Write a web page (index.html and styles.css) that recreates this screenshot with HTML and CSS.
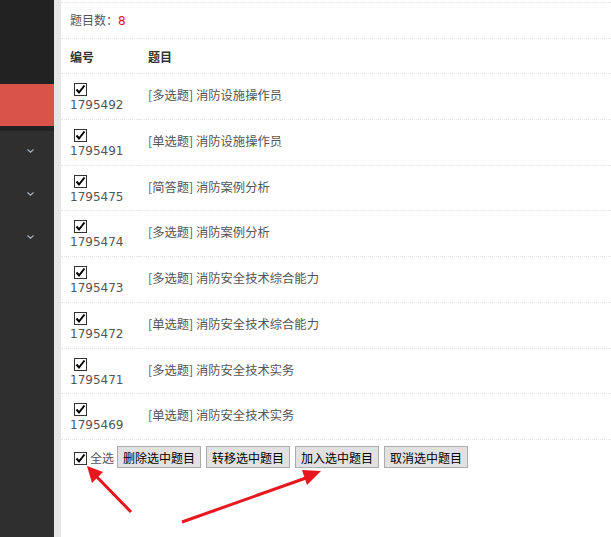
FILE: index.html
```html
<!DOCTYPE html>
<html>
<head>
  <title>题目列表</title>
  <meta charset="UTF-8">
  <link rel="stylesheet" href="styles.css">
</head>
<body>
  <div class="page">
    <div class="sidebar">
      <div class="side-top"></div>
      <div class="side-active"></div>
      <div class="side-gap"></div>
      <div class="side-menu">
        <div class="side-item"><svg class="chev" width="7" height="4" viewBox="0 0 7 4"><polyline points="0.5,0.5 3.5,3.2 6.5,0.5" fill="none" stroke="#a8b2bc" stroke-width="1.2"/></svg></div>
        <div class="side-item"><svg class="chev" width="7" height="4" viewBox="0 0 7 4"><polyline points="0.5,0.5 3.5,3.2 6.5,0.5" fill="none" stroke="#a8b2bc" stroke-width="1.2"/></svg></div>
        <div class="side-item"><svg class="chev" width="7" height="4" viewBox="0 0 7 4"><polyline points="0.5,0.5 3.5,3.2 6.5,0.5" fill="none" stroke="#a8b2bc" stroke-width="1.2"/></svg></div>
      </div>
    </div>
    <div class="gutter"></div>
    <div class="main">
      <div class="count-row">题目数：<span class="count">8</span></div>
      <table class="qlist">
        <thead>
          <tr><th class="col-id">编号</th><th>题目</th></tr>
        </thead>
        <tbody id="rows"></tbody>
      </table>
      <div class="actions">
        <span class="cbx"><svg viewBox="0 0 13 13" width="13" height="13"><rect x="0.5" y="0.5" width="12" height="12" fill="#fff" stroke="#333"/><path d="M2.5 6.5 L5 9.5 L10.5 2.5" fill="none" stroke="#000" stroke-width="2"/></svg></span>
        <span class="all-label">全选</span>
        <button>删除选中题目</button>
        <button>转移选中题目</button>
        <button>加入选中题目</button>
        <button>取消选中题目</button>
      </div>
      <svg class="arrows" width="400" height="90" viewBox="0 0 400 90">
        <line x1="131" y1="512" x2="95" y2="475" transform="translate(-61 -450)" stroke="#e8171d" stroke-width="3"/>
        <polygon points="87,466 103,472 92,483" transform="translate(-61 -450)" fill="#e8171d"/>
        <line x1="182" y1="522" x2="306" y2="478" transform="translate(-61 -450)" stroke="#e8171d" stroke-width="3"/>
        <polygon points="321,471 302,470 307,485" transform="translate(-61 -450)" fill="#e8171d"/>
      </svg>
    </div>
  </div>

  <script>
    const questions = [
      ['1795492', '多选题', '消防设施操作员'],
      ['1795491', '单选题', '消防设施操作员'],
      ['1795475', '简答题', '消防案例分析'],
      ['1795474', '多选题', '消防案例分析'],
      ['1795473', '多选题', '消防安全技术综合能力'],
      ['1795472', '单选题', '消防安全技术综合能力'],
      ['1795471', '多选题', '消防安全技术实务'],
      ['1795469', '单选题', '消防安全技术实务']
    ];
    const box = document.querySelector('.actions .cbx').innerHTML;
    const tbody = document.getElementById('rows');
    questions.forEach(q => {
      const tr = document.createElement('tr');
      tr.innerHTML = '<td class="col-id"><span class="cbx">' + box + '</span><div class="qid">' + q[0] + '</div></td>' +
        '<td class="qtext">[' + q[1] + '] ' + q[2] + '</td>';
      tbody.appendChild(tr);
    });
  </script>
</body>
</html>
```

FILE: styles.css
```css
body {
  margin: 0;
  font-family: "DejaVu Sans", "Noto Sans CJK SC", sans-serif;
  font-size: 12px;
  color: #555;
  background-color: #fff;
}
.page {
  display: flex;
  height: 537px;
  overflow: hidden;
}
.sidebar {
  width: 54px;
  flex-shrink: 0;
  background-color: #2f2f2f;
  display: flex;
  flex-direction: column;
}
.side-top {
  height: 84px;
  background-color: #222;
}
.side-active {
  height: 42px;
  background-color: #d9534a;
}
.side-gap {
  height: 5px;
  background-color: #222;
}
.side-menu {
  padding-top: 18px;
}
.side-item {
  height: 43px;
  display: flex;
  justify-content: center;
  padding-left: 6px;
}
.chev {
  display: block;
}
.gutter {
  width: 7px;
  flex-shrink: 0;
  background-color: #e6e6e6;
}
.main {
  flex: 1;
  position: relative;
  padding-top: 2px;
}
.count-row {
  border-top: 1px dotted #e3e3e3;
  height: 35px;
  line-height: 34px;
  padding-left: 9px;
  font-family: "Noto Sans CJK SC", sans-serif;
}
.count {
  color: #e8121a;
  font-family: "DejaVu Sans", sans-serif;
}
.qlist {
  width: 100%;
  border-collapse: collapse;
}
.qlist th, .qlist td {
  border-top: 1px dotted #e3e3e3;
  text-align: left;
  vertical-align: middle;
}
.qlist th {
  height: 34px;
  padding: 0 0 0 9px;
  font-family: "Noto Sans CJK SC", sans-serif;
  font-weight: bold;
  font-size: 12px;
  color: #333;
}
.qlist th.col-id, .qlist td.col-id {
  width: 69px;
}
.qlist td {
  padding: 9px 0 5.75px 9px;
}
.qlist td .cbx {
  display: block;
  height: 13px;
  margin-left: 4px;
}
.cbx svg {
  display: block;
}
.qid {
  line-height: 16px;
  margin-top: 1px;
  color: #555;
}
.qlist td.qtext {
  font-family: "Noto Sans CJK SC", sans-serif;
  font-size: 12.3px;
  color: #555;
  padding-top: 3px;
}
.actions {
  border-top: 1px dotted #e3e3e3;
  display: flex;
  align-items: center;
  padding: 6px 0 0 13px;
}
.actions .cbx {
  margin-top: 2px;
}
.all-label {
  font-family: "Noto Sans CJK SC", sans-serif;
  margin: 0 3px 0 3px;
  color: #555;
}
button {
  font-family: "Noto Sans CJK SC", sans-serif;
  font-size: 12px;
  color: #000;
  background-color: #e1e1e1;
  border: 1px solid #adadad;
  border-radius: 0;
  height: 22px;
  padding: 0 4px;
  margin-right: 5px;
  width: 84px;
}
.arrows {
  position: absolute;
  left: 0;
  top: 450px;
}
```
